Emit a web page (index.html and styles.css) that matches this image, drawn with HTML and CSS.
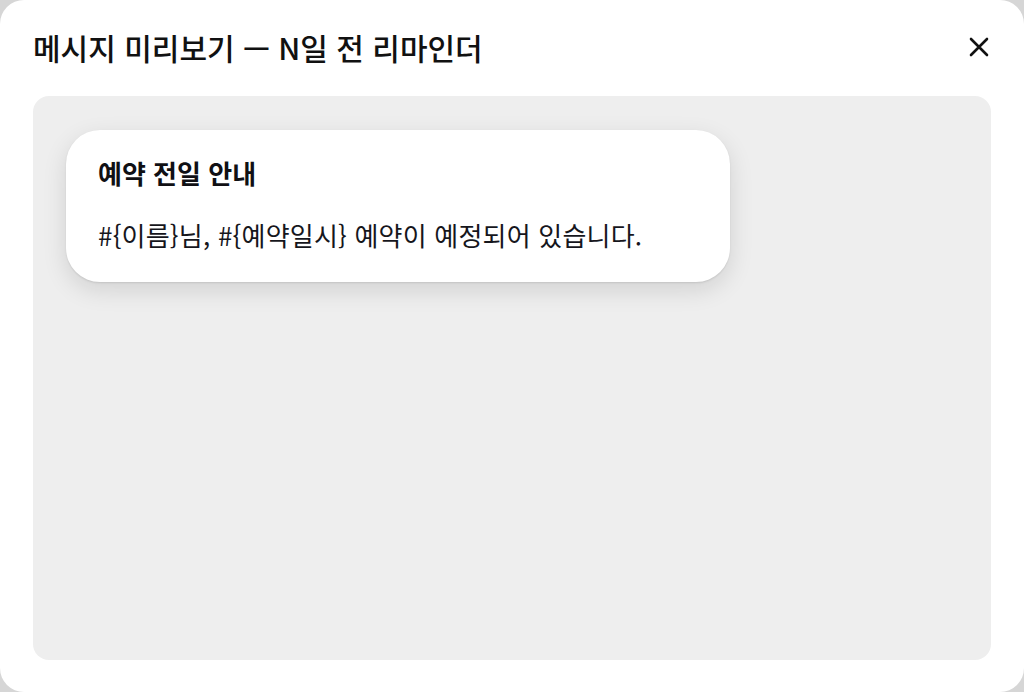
FILE: index.html
```html
<!doctype html>
<html lang="ko">
<head>
    <meta charset="UTF-8">
    <title>메시지 미리보기</title>
    <link rel="stylesheet" href="styles.css">
</head>
<body>
<div class="modal">
    <div class="modal-head">
        <h2>메시지 미리보기 — N일 전 리마인더</h2>
        <button class="close" aria-label="닫기">
            <svg width="22" height="22" viewBox="0 0 22 22">
                <path d="M3 3L19 19M19 3L3 19" stroke="#111" stroke-width="2.6" stroke-linecap="round"/>
            </svg>
        </button>
    </div>
    <div class="preview">
        <div class="bubble">
            <h3>예약 전일 안내</h3>
            <p>#{이름}님, #{예약일시} 예약이 예정되어 있습니다.</p>
        </div>
    </div>
</div>
</body>
</html>
```

FILE: styles.css
```css
* {
    margin: 0;
    padding: 0;
    box-sizing: border-box;
}

html, body {
    height: 100%;
}

body {
    background: #d6d6d6;
    font-family: "Noto Sans CJK KR", "Noto Sans", sans-serif;
    color: #111;
}

.modal {
    height: 692px;
    background: #fff;
    border-radius: 24px;
    padding: 0 33px 32px;
    display: flex;
    flex-direction: column;
}

.modal-head {
    height: 96px;
    display: flex;
    align-items: center;
    justify-content: space-between;
    padding-bottom: 2px;
}

.modal-head h2 {
    font-size: 30px;
    font-weight: 500;
    line-height: 40px;
    color: #111;
}

.close {
    border: 0;
    background: none;
    width: 22px;
    height: 22px;
    margin-right: 1px;
    display: flex;
}

.preview {
    flex: 1;
    background: #eeeeee;
    border-radius: 16px;
    padding: 34px 33px;
}

.bubble {
    width: 664px;
    background: #fff;
    border-radius: 34px;
    padding: 27px 32px 31px;
    box-shadow: 0 8px 24px rgba(0, 0, 0, 0.12), 0 1px 2px rgba(0, 0, 0, 0.1);
}

.bubble h3 {
    font-size: 26px;
    font-weight: 700;
    color: #101014;
    line-height: 32px;
}

.bubble p {
    margin-top: 30px;
    font-size: 26px;
    line-height: 32px;
    letter-spacing: 0.2px;
    color: #16161c;
}
```
